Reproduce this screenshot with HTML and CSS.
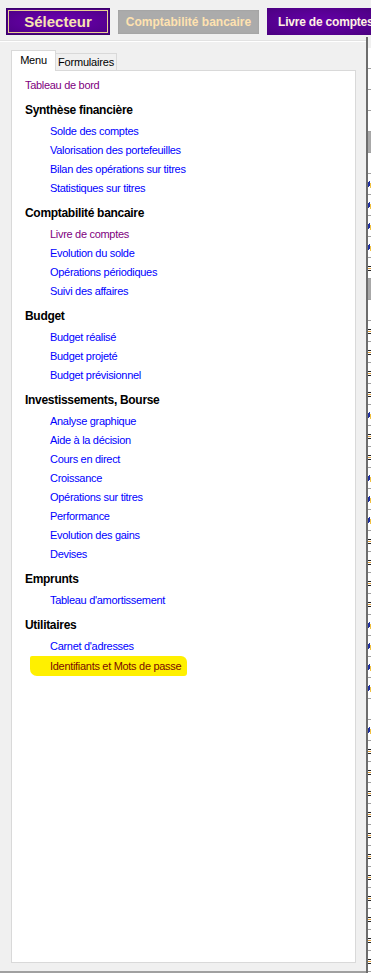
FILE: index.html
```html
<!DOCTYPE html>
<html>
<head>
	<title>Sélecteur</title>
	<link rel="stylesheet" href="styles.css">
</head>
<body>

	<div class="toolbar">
		<button class="btn btn-select">Sélecteur</button>
		<button class="btn btn-off">Comptabilité bancaire</button>
		<button class="btn btn-on">Livre de comptes</button>
	</div>

	<div class="main">
		<div class="panel">
			<div class="tabs">
				<div class="tab active">Menu</div>
				<div class="tab">Formulaires</div>
			</div>
			<div class="page">
				<a class="top visited">Tableau de bord</a>

				<div class="group">
					<div class="title">Synthèse financière</div>
					<a>Solde des comptes</a>
					<a>Valorisation des portefeuilles</a>
					<a>Bilan des opérations sur titres</a>
					<a>Statistiques sur titres</a>
				</div>

				<div class="group">
					<div class="title">Comptabilité bancaire</div>
					<a class="visited">Livre de comptes</a>
					<a>Evolution du solde</a>
					<a>Opérations périodiques</a>
					<a>Suivi des affaires</a>
				</div>

				<div class="group">
					<div class="title">Budget</div>
					<a>Budget réalisé</a>
					<a>Budget projeté</a>
					<a>Budget prévisionnel</a>
				</div>

				<div class="group">
					<div class="title">Investissements, Bourse</div>
					<a>Analyse graphique</a>
					<a>Aide à la décision</a>
					<a>Cours en direct</a>
					<a>Croissance</a>
					<a>Opérations sur titres</a>
					<a>Performance</a>
					<a>Evolution des gains</a>
					<a>Devises</a>
				</div>

				<div class="group">
					<div class="title">Emprunts</div>
					<a>Tableau d'amortissement</a>
				</div>

				<div class="group">
					<div class="title">Utilitaires</div>
					<a>Carnet d'adresses</a>
					<a class="marked"><span class="hl">Identifiants et Mots de passe</span></a>
				</div>
			</div>
		</div>
		<div class="sep"></div>
		<div class="strip">
			<div class="row"></div>
			<div class="row"></div>
			<div class="row"></div>
			<div class="row"></div>
			<div class="row grey"></div>
			<div class="row"></div>
			<div class="row ico"></div>
			<div class="row ico"></div>
			<div class="row ico"></div>
			<div class="row ico"></div>
			<div class="row doc"></div>
			<div class="row grey"></div>
			<div class="row"></div>
			<div class="row doc"></div>
			<div class="row doc"></div>
			<div class="row doc"></div>
			<div class="row doc"></div>
			<div class="row ico"></div>
			<div class="row doc"></div>
			<div class="row doc"></div>
			<div class="row ico"></div>
			<div class="row ico"></div>
			<div class="row ico"></div>
			<div class="row doc"></div>
			<div class="row doc"></div>
			<div class="row doc"></div>
			<div class="row doc"></div>
			<div class="row ico"></div>
			<div class="row ico"></div>
			<div class="row ico"></div>
			<div class="row ico"></div>
			<div class="row"></div>
			<div class="row ico"></div>
			<div class="row doc"></div>
			<div class="row doc"></div>
			<div class="row doc"></div>
			<div class="row doc"></div>
			<div class="row doc"></div>
			<div class="row doc"></div>
			<div class="row doc"></div>
			<div class="row doc"></div>
			<div class="row doc"></div>
			<div class="row doc"></div>
			<div class="row doc"></div>
			<div class="row doc"></div>
		</div>
	</div>

</body>
</html>
```

FILE: styles.css
```css
body{
	margin: 0;
	height: 973px;
	overflow: hidden;
	background: #f0f0f0;
	font-family: "Liberation Sans", Arial, sans-serif;
	font-size: 12px;
}

.toolbar{
	display: flex;
	align-items: center;
	gap: 8px;
	height: 27px;
	padding: 8px 0 0 6px;
	white-space: nowrap;
	overflow: hidden;
}

.btn{
	font-family: "Liberation Sans", Arial, sans-serif;
	font-weight: bold;
	border: none;
	padding: 0;
	flex: none;
}

.btn-select{
	width: 104px;
	height: 27px;
	font-size: 15px;
	color: #f7e4b0;
	background: radial-gradient(ellipse at center, #6c00b4 0%, #5a0096 60%, #4c0084 100%);
	border: 1px solid #3c006c;
	box-shadow: inset 0 0 0 1px #4c0084, inset 0 0 0 2px #e8d090;
}

.btn-off{
	width: 141px;
	height: 24px;
	font-size: 12px;
	color: #ffe2b0;
	background: #ababab;
	box-shadow: inset 0 0 2px #999;
}

.btn-on{
	width: 105px;
	height: 27px;
	font-size: 12px;
	letter-spacing: -0.2px;
	color: #fff2e2;
	text-align: left;
	padding-left: 11px;
	background: radial-gradient(ellipse at center, #6400a8 0%, #54008e 70%, #4a0080 100%);
}

.main{
	display: flex;
	margin-top: 5px;
	height: 933px;
}

.panel{
	box-sizing: content-box;
	width: 345px;
	height: 921px;
	padding: 9px 10px 0 11px;
	border-top: 1px solid #e2e2e2;
	box-shadow: inset 0 1px 0 #ffffff;
	border-bottom: 2px solid #a0a0a0;
}

.tabs{
	display: flex;
	align-items: flex-end;
	height: 20px;
	font-size: 11px;
	letter-spacing: -0.2px;
}

.tab{
	height: 17px;
	line-height: 17px;
	text-align: center;
	background: #f0f0f0;
	border: 1px solid #d9d9d9;
	border-bottom: none;
	color: #000;
	box-sizing: border-box;
}

.tab.active{
	width: 45px;
	height: 21px;
	line-height: 19px;
	background: #fff;
	position: relative;
	z-index: 1;
	margin-bottom: -1px;
}

.tab + .tab{
	width: 61px;
	border-left: none;
}

.page{
	height: 886px;
	background: #fff;
	border: 1px solid #d9d9d9;
	padding: 5px 0 0 13px;
}

.page a{
	display: block;
	height: 19px;
	line-height: 19px;
	padding-left: 25px;
	color: #0000ff;
	letter-spacing: -0.3px;
	font-size: 11px;
}

.page a.top{
	padding-left: 0;
}

.page a.visited{
	color: #800080;
}

.group{
	margin-top: 7px;
}

.title{
	height: 20px;
	line-height: 17px;
	font-weight: bold;
	color: #000;
	letter-spacing: -0.3px;
}

.page a.marked{
	color: #7a0a00;
}

.hl{
	display: inline-block;
	background: #fff000;
	margin-left: -20px;
	padding: 0 6px 0 20px;
	height: 20px;
	line-height: 20px;
	border-radius: 2px 6px 3px 7px;
}

.sep{
	width: 2px;
	background: #6d6d6d;
	margin-top: -3px;
}

.strip{
	flex: 1;
	background: #f0f0f0;
	padding-top: 8px;
}

.row{
	height: 20px;
	border-bottom: 1px solid #a0a0a0;
	background: #fff;
	position: relative;
}

.row.grey{
	background: #a8a8a8;
}

.ico::after{
	content: "";
	position: absolute;
	left: 0;
	top: 8px;
	width: 1px;
	height: 5px;
	background: #2030a0;
	box-shadow: 1px -1px 0 #2030a0, 2px 1px 0 #f0c040;
}

.doc::after{
	content: "";
	position: absolute;
	left: 0;
	top: 8px;
	width: 3px;
	height: 1px;
	background: #222;
	box-shadow: 0 2px 0 #e0a040, 0 4px 0 #222;
}
```
